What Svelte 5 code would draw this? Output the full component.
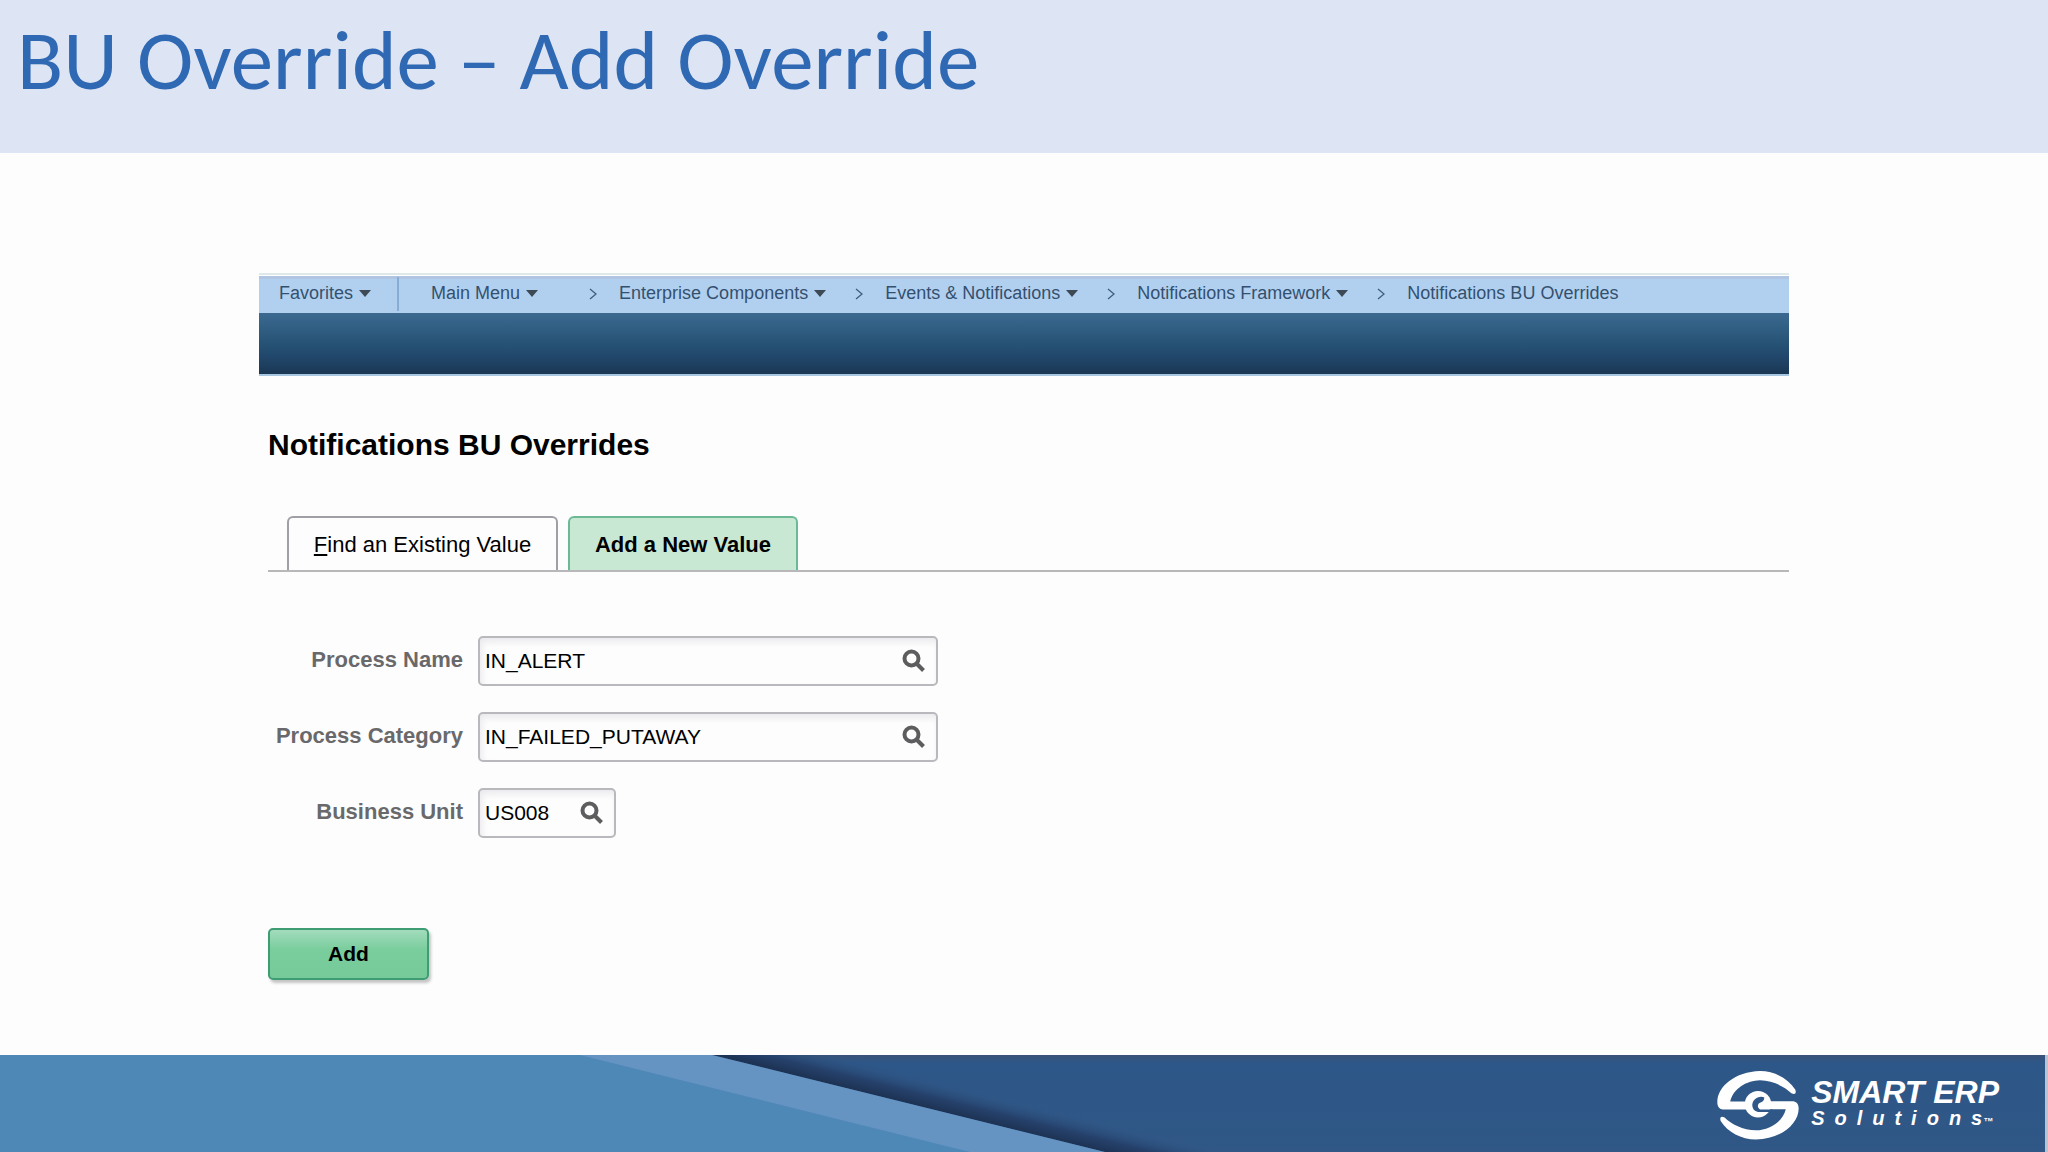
<script lang="ts">
	const crumbs = ['Main Menu', 'Enterprise Components', 'Events & Notifications', 'Notifications Framework'];

	let fields = $state([
		{ id: 'process-name', label: 'Process Name', value: 'IN_ALERT', short: false },
		{ id: 'process-category', label: 'Process Category', value: 'IN_FAILED_PUTAWAY', short: false },
		{ id: 'business-unit', label: 'Business Unit', value: 'US008', short: true }
	]);
</script>

<div class="slide">
	<header class="slide-header">
		<h1>BU Override – Add Override</h1>
	</header>

	<main class="app">
		<nav class="crumbs">
			<button class="menu favorites" type="button">Favorites<span class="caret"></span></button>
			{#each crumbs as crumb, i}
				<button class="menu" class:root={i === 0} type="button">{crumb}<span class="caret"></span></button>
				<svg class="chevron" viewBox="0 0 8 12"><path d="M1 1l6 5-6 5" /></svg>
			{/each}
			<a class="current" href="#overrides">Notifications BU Overrides</a>
		</nav>
		<div class="banner"></div>

		<div class="content">
			<h2>Notifications BU Overrides</h2>

			<div class="tabs">
				<button class="tab" type="button"><u>F</u>ind an Existing Value</button>
				<button class="tab active" type="button">Add a New Value</button>
			</div>

			<form onsubmit={(e) => e.preventDefault()}>
				{#each fields as field}
					<div class="row">
						<label for={field.id}>{field.label}</label>
						<div class="lookup" class:short={field.short}>
							<input id={field.id} type="text" bind:value={field.value} />
							<button type="button" aria-label="Look up {field.label}">
								<svg viewBox="0 0 24 24">
									<circle cx="9.5" cy="9.5" r="7" />
									<path d="M14.5 14.5l7 7" />
								</svg>
							</button>
						</div>
					</div>
				{/each}
				<button class="add" type="submit">Add</button>
			</form>
		</div>
	</main>

	<footer>
		<svg class="swoosh" viewBox="0 0 1300 97">
			<defs>
				<linearGradient id="shade" gradientUnits="userSpaceOnUse" x1="908" y1="48" x2="915" y2="20">
					<stop offset="0" stop-color="#1d3354" />
					<stop offset="0.4" stop-color="#25406a" />
					<stop offset="1" stop-color="#305786" stop-opacity="0" />
				</linearGradient>
			</defs>
			<path d="M712 0H850L1243 97H1105Z" fill="url(#shade)" />
			<path d="M0 0H712L1105 97H0Z" fill="#6694c2" />
			<path d="M0 0H580L970 97H0Z" fill="#4e88b7" />
		</svg>
		<div class="brand">
			<svg class="mark" viewBox="20 18 248 208">
				<g fill="#fff">
					<path id="arm" d="M257 74C235 40 195 18 150 18C75 20 21 65 21 112C21 126 28 133 38 134H112V110H60C70 70 110 47 150 46C190 47 225 65 245 85Q262 92 257 74Z" />
					<use href="#arm" transform="rotate(180 144 121.5)" />
					<circle cx="144" cy="118" r="40" />
				</g>
				<path
					d="M163 98C148 90 124 104 127 124C129 138 142 142 152 142H188V134H150C141 128 142 118 150 114C158 112 163 107 163 98Z"
					fill="#2f5787"
				/>
			</svg>
			<div class="brand-text">
				<span class="brand-name">SMART ERP</span>
				<span class="brand-sub">Solutions<small>™</small></span>
			</div>
		</div>
	</footer>
</div>

<style>
	:global(body) {
		margin: 0;
		background: #fdfdfd;
	}

	.slide {
		display: flex;
		flex-direction: column;
		min-height: 100vh;
		font-family: 'Liberation Sans', Arial, sans-serif;
		color: #000;
	}

	button {
		font-family: inherit;
		cursor: pointer;
	}

	.slide-header {
		height: 153px;
		background: #dde4f3;
	}

	h1 {
		margin: 0;
		padding: 12px 17px;
		font: 400 85px/96px Carlito, Lato, sans-serif;
		color: #2f69b3;
	}

	.app {
		flex: 1;
		margin: 120px 259px 0;
	}

	.crumbs {
		display: flex;
		align-items: center;
		height: 38px;
		border-top: 2px solid #dfe8e8;
		background: #b1d0f0;
		box-shadow: inset 0 1px #fff, inset 0 4px #afc5e1;
	}

	.menu {
		display: flex;
		align-items: center;
		gap: 6px;
		padding: 0 0 2px;
		border: 0;
		background: none;
		font-size: 18px;
		line-height: 20px;
		color: #34506f;
	}

	.favorites {
		height: 34px;
		padding: 0 26px 2px 20px;
		border-right: 2px solid #86aed4;
	}

	.root {
		padding: 0 22px 2px 32px;
	}

	.caret {
		border: 6px solid transparent;
		border-top: 7px solid #3d4a56;
		border-bottom: 0;
	}

	.chevron {
		width: 8px;
		height: 12px;
		margin: 0 22px 0 29px;
		fill: none;
		stroke: #3f5d7d;
		stroke-width: 1.3;
	}

	.current {
		padding-bottom: 2px;
		font-size: 18px;
		line-height: 20px;
		color: #34506f;
		text-decoration: none;
	}

	.banner {
		height: 61px;
		border-bottom: 2px solid #a9c6e0;
		background: linear-gradient(#3b6990, #265375 50%, #21486c 70%, #1b3754);
	}

	.content {
		padding-left: 9px;
	}

	h2 {
		margin: 0;
		padding: 51px 0 53px;
		font-size: 30px;
		line-height: 36px;
	}

	.tabs {
		display: flex;
		gap: 10px;
		padding-left: 19px;
		border-bottom: 2px solid #b8b8bb;
	}

	.tab {
		width: 271px;
		height: 54px;
		padding: 2px 0 0;
		border: 2px solid #a09fa6;
		border-bottom: 0;
		border-radius: 6px 6px 0 0;
		background: #fdfdfe;
		font-size: 22px;
		color: #000;
	}

	.tab.active {
		width: 230px;
		border-color: #6cba95;
		background: #c9e8d3;
		font-weight: 700;
	}

	form {
		display: flex;
		flex-direction: column;
		gap: 26px;
		padding-top: 64px;
	}

	.row {
		display: grid;
		grid-template-columns: 195px auto;
		justify-content: start;
		align-items: center;
		gap: 15px;
	}

	label {
		padding-bottom: 2px;
		font-size: 22px;
		font-weight: 700;
		text-align: right;
		color: #69696b;
	}

	.lookup {
		display: flex;
		align-items: center;
		box-sizing: border-box;
		width: 460px;
		height: 50px;
		border: 2px solid #b9b8bc;
		border-radius: 5px;
		background: #fdfdfd;
		box-shadow: inset 2px 4px 6px #ebe9ec;
	}

	.lookup.short {
		width: 138px;
	}

	.lookup input {
		flex: 1;
		min-width: 0;
		padding: 0 0 0 5px;
		border: 0;
		outline: 0;
		background: none;
		font: inherit;
		font-size: 21px;
	}

	.lookup button {
		display: flex;
		padding: 0 10px 0 0;
		border: 0;
		background: none;
	}

	.lookup svg {
		width: 24px;
		height: 24px;
		fill: none;
		stroke: #5d5d5f;
		stroke-width: 4;
	}

	.add {
		width: 161px;
		height: 52px;
		margin-top: 64px;
		border: 2px solid #3f9d74;
		border-radius: 5px;
		background: linear-gradient(#a3dcbd, #7acd9d 40%, #76ca99);
		box-shadow: 2px 3px 3px #c4c4c4;
		font-size: 21px;
		font-weight: 700;
	}

	footer {
		position: relative;
		display: flex;
		justify-content: flex-end;
		align-items: center;
		height: 97px;
		border-right: 3px solid #b9c4d3;
		background: linear-gradient(#3a5278, #2d5788 8%, #305786);
	}

	.swoosh {
		position: absolute;
		left: 0;
		top: 0;
		width: 1300px;
		height: 97px;
	}

	.brand {
		display: flex;
		align-items: center;
		gap: 12px;
		padding: 4px 46px 0 0;
		color: #fff;
	}

	.mark {
		width: 82px;
		height: 69px;
	}

	.brand-text {
		display: flex;
		flex-direction: column;
		font-style: italic;
		font-weight: 700;
	}

	.brand-name {
		font-size: 32px;
		line-height: 28px;
	}

	.brand-sub {
		font-size: 20px;
		line-height: 24px;
		letter-spacing: 10px;
	}

	.brand-sub small {
		margin-left: -9px;
		font-size: 10px;
		letter-spacing: 0;
	}
</style>
